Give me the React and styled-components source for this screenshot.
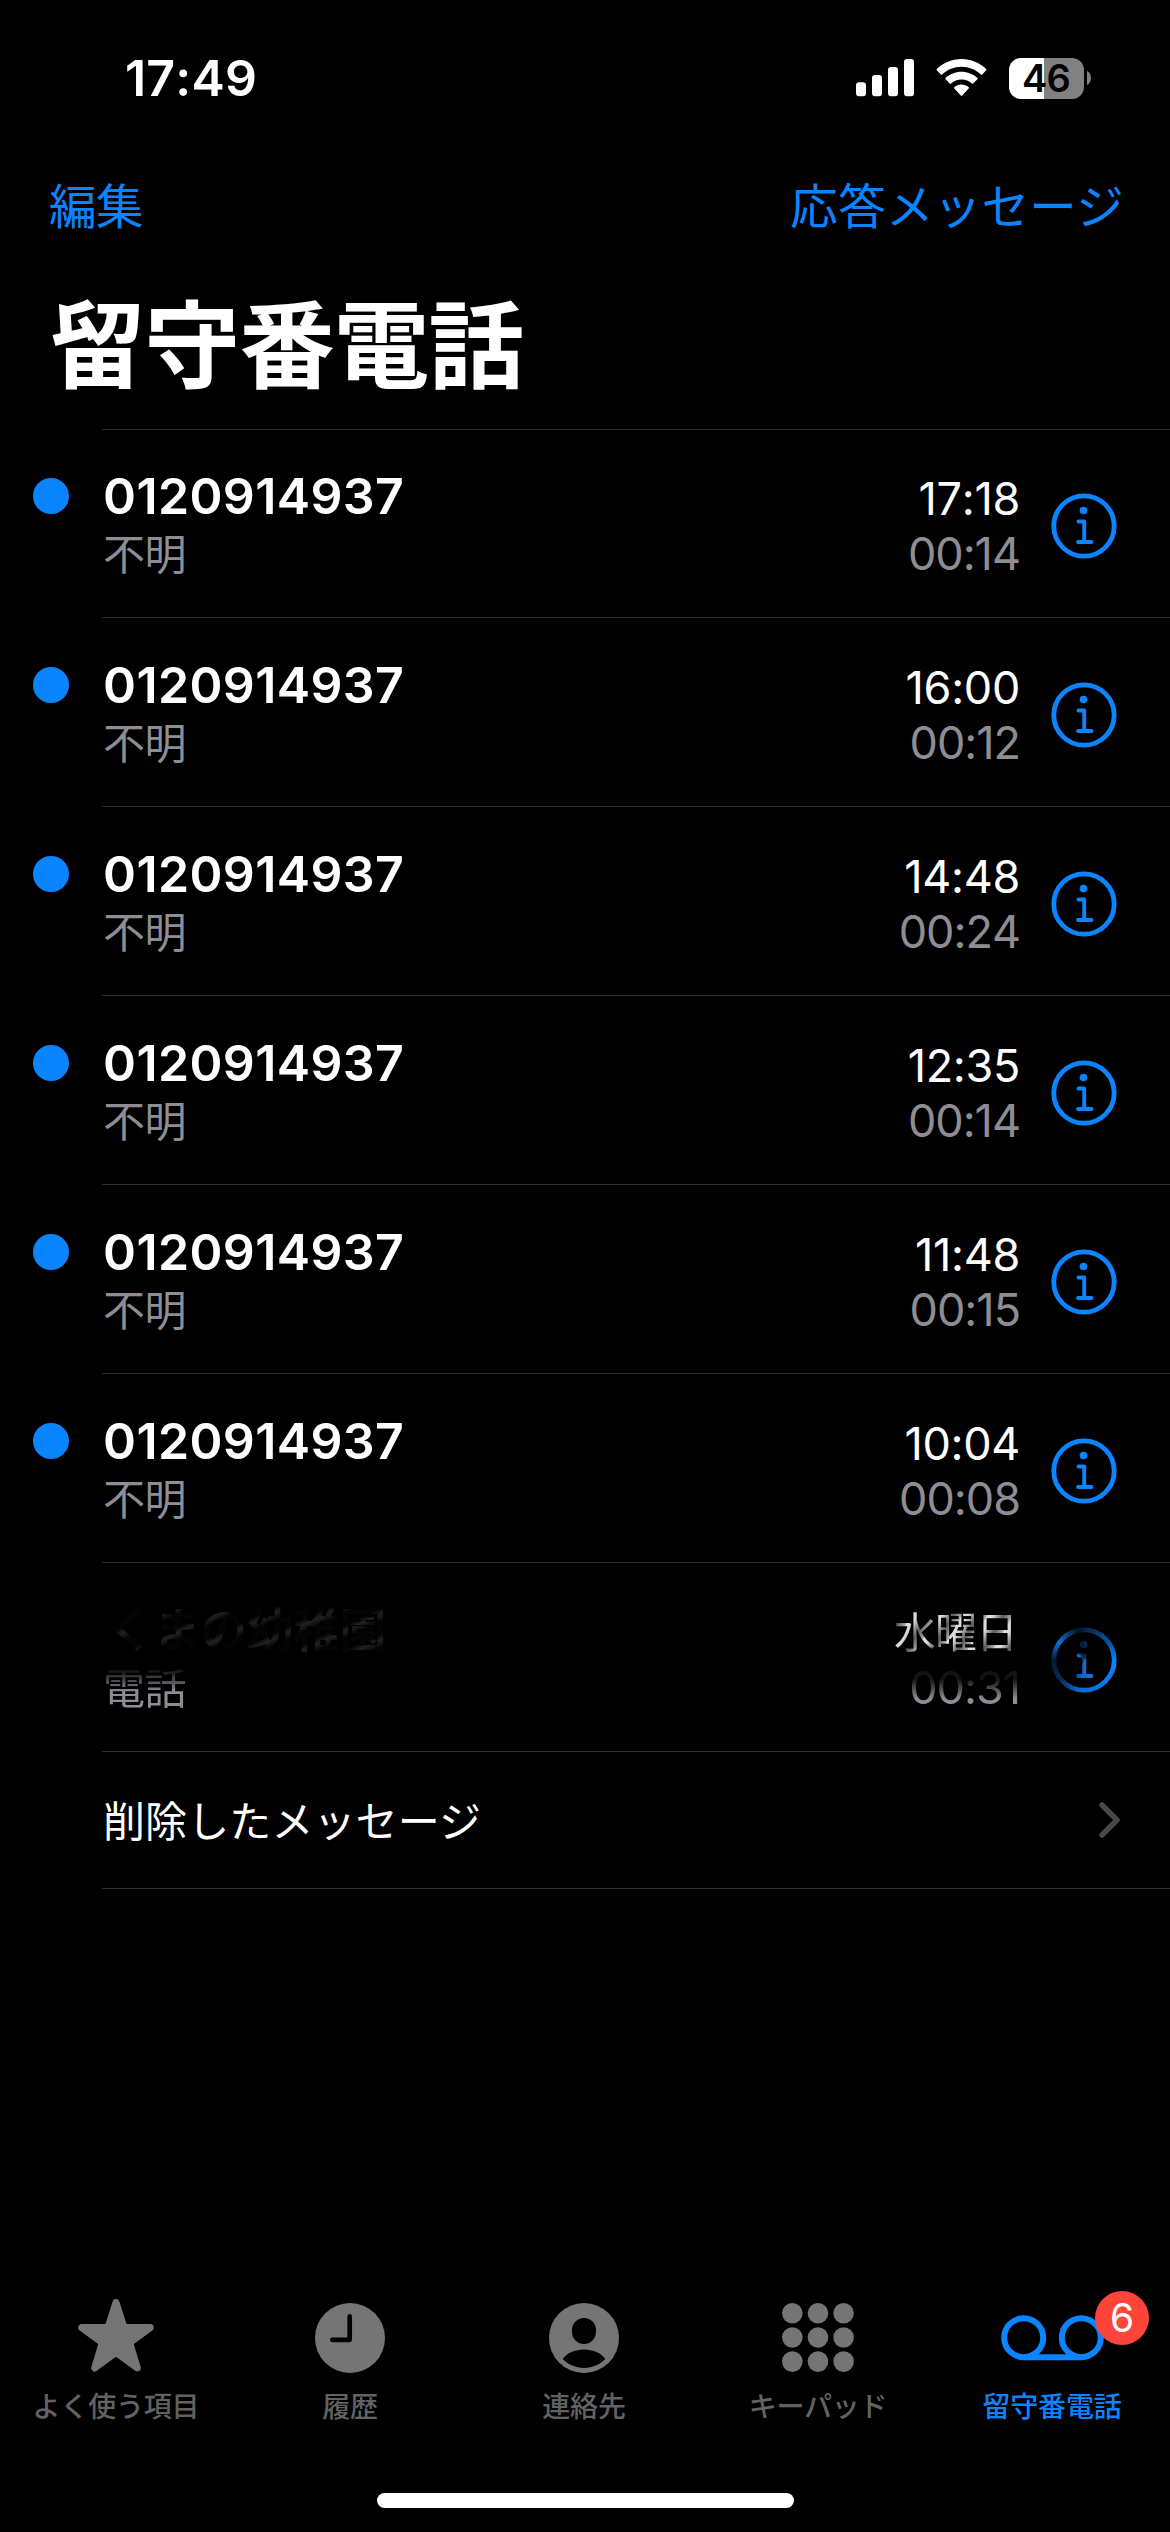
import styled, { createGlobalStyle, css } from 'styled-components'

const BLUE = '#0a84ff'
const GRAY = '#8d8d93'

const GlobalStyle = createGlobalStyle`
  * {
    box-sizing: border-box;
  }
  body {
    margin: 0;
    background-color: #000;
    color: #fff;
    font-family: Inter, 'Noto Sans CJK JP', sans-serif;
  }
  button {
    padding: 0;
    border: none;
    background: none;
    font: inherit;
    color: inherit;
  }
  svg {
    display: block;
    flex-shrink: 0;
  }
`
const Screen = styled.div`
  display: flex;
  flex-direction: column;
  width: 1170px;
  height: 2532px;
  background-color: #000;
  overflow: hidden;
`
const StatusBar = styled.div`
  display: flex;
  justify-content: space-between;
  align-items: center;
  height: 156px;
  padding: 0 79px 0 125px;
`
const Clock = styled.time`
  font-size: 50px;
  font-weight: 600;
  line-height: 60px;
  letter-spacing: 0.2px;
  font-kerning: none;
`
const StatusIcons = styled.div`
  display: flex;
  align-items: center;
  gap: 22px;
`
const Battery = styled.div`
  display: flex;
  align-items: center;
  gap: 3px;
`
const BatteryBody = styled.div`
  width: 75px;
  height: 41px;
  padding-right: 1px;
  border-radius: 12px;
  background: linear-gradient(to right, #fff 35px, #818181 35px);
  color: #000;
  font-size: 38px;
  font-weight: 600;
  line-height: 41px;
  letter-spacing: -0.8px;
  text-align: center;
`
const NavBar = styled.nav`
  display: flex;
  justify-content: space-between;
  align-items: center;
  height: 102px;
  padding: 0 46px 0 49px;
`
const NavButton = styled.button`
  color: ${BLUE};
  font-size: 47.5px;
  line-height: 60px;
  letter-spacing: ${({ $spacing = 0 }) => $spacing}px;
`
const Title = styled.h1`
  height: 171px;
  margin: 0;
  padding: 20px 0 0 50px;
  font-size: 95.5px;
  font-weight: 700;
  line-height: 136px;
  letter-spacing: -0.9px;
`
const List = styled.ul`
  margin: 0;
  padding: 0;
  list-style: none;
`
const Row = styled.li`
  display: flex;
  height: ${({ $first }) => ($first ? 188 : 189)}px;
`
const DotColumn = styled.div`
  flex: none;
  width: 102px;
  padding: ${({ $first }) => ($first ? 49 : 50)}px 0 0 33px;
`
const UnreadDot = styled.div`
  width: 36px;
  height: 36px;
  border-radius: 50%;
  background-color: ${BLUE};
`
const RowBody = styled.div`
  display: flex;
  flex: 1;
  padding: ${({ $first }) => ($first ? 34 : 35)}px 53px 0 1px;
  border-top: 1px solid #2d2d2f;
`
const Caller = styled.div`
  flex: 1;
`
const CallerName = styled.div`
  height: 64px;
  font-size: 50px;
  font-weight: 600;
  line-height: 64px;
  letter-spacing: 0.4px;
  font-kerning: none;
  ${({ $erased }) =>
    $erased &&
    css`
      padding-left: 4px;
      font-size: 47px;
      letter-spacing: -0.5px;
      color: transparent;
      background: repeating-linear-gradient(
        155deg,
        #040404 0 12px,
        #212121 17px,
        #080808 23px
      );
      background-clip: text;
    `}
`
const CallerLabel = styled.div`
  color: ${GRAY};
  font-size: 42px;
  line-height: 54px;
  letter-spacing: -0.4px;
  ${({ $erased }) =>
    $erased &&
    css`
      mask-image: linear-gradient(to bottom, transparent 5px, #000 30px);
    `}
`
const Times = styled.div`
  padding-top: 3px;
  text-align: right;
  font-size: 45px;
  font-kerning: none;
`
const ReceivedAt = styled.div`
  height: 56px;
  line-height: 64px;
  letter-spacing: -0.3px;
  ${({ $erased }) =>
    $erased &&
    css`
      padding-right: 3px;
      font-size: 42px;
      letter-spacing: -1px;
      color: transparent;
      background: repeating-linear-gradient(
        120deg,
        #dcdcdc 0 5px,
        #5a5a5a 14px,
        #b0b0b0 22px
      );
      background-clip: text;
    `}
`
const Duration = styled.div`
  color: ${GRAY};
  line-height: 62px;
  letter-spacing: -1px;
  ${({ $erased }) =>
    $erased &&
    css`
      mask-image: linear-gradient(to bottom, #0002 22px, #000 42px);
    `}
`
const InfoButton = styled.button`
  align-self: flex-start;
  margin: 29px 0 0 31px;
  ${({ $erased }) =>
    $erased &&
    css`
      mask-image: conic-gradient(
        #0004 0deg,
        #000a 60deg,
        #000 90deg,
        #000c 190deg,
        #0005 230deg,
        #0003 270deg,
        #000d 305deg,
        #0003 345deg
      );
    `}
`
const DeletedRow = styled.li`
  display: flex;
  align-items: center;
  justify-content: space-between;
  height: 138px;
  margin-left: 102px;
  padding: 0 48px 0 1px;
  border-top: 1px solid #2d2d2f;
  border-bottom: 1px solid #2d2d2f;
`
const DeletedLabel = styled.span`
  padding-bottom: 4px;
  font-size: 42px;
  letter-spacing: 0.1px;
`
const TabBar = styled.nav`
  display: grid;
  grid-template-columns: repeat(5, 1fr);
  width: 1170px;
  height: 206px;
  margin: auto 0 0 -1px;
`
const Tab = styled.button`
  display: flex;
  flex-direction: column;
  align-items: center;
  color: ${({ $active }) => ($active ? BLUE : '#757575')};
`
const TabIcon = styled.div`
  position: relative;
  display: flex;
  justify-content: center;
  align-items: center;
  width: 104px;
  height: 102px;
`
const TabLabel = styled.span`
  color: ${({ $active }) => ($active ? BLUE : '#626262')};
  font-size: 28px;
  font-weight: 500;
  line-height: 37px;
  letter-spacing: -0.2px;
  white-space: nowrap;
`
const Badge = styled.span`
  position: absolute;
  top: 4px;
  left: 95px;
  width: 54px;
  height: 54px;
  border-radius: 50%;
  background-color: #ff453a;
  color: #fff;
  font-size: 39px;
  line-height: 54px;
  text-align: center;
`
const HomeIndicator = styled.div`
  width: 417px;
  height: 15px;
  margin: 0 auto 24px;
  border-radius: 8px;
  background-color: #fff;
`

const SignalIcon = () => (
  <svg width="58" height="38" viewBox="0 0 58 38" fill="#fff">
    <rect x="0" y="23.300" width="10" height="14" rx="3" />
    <rect x="16" y="16" width="10" height="21.300" rx="3" />
    <rect x="32" y="8" width="10" height="29.300" rx="3" />
    <rect x="48" y="0" width="10" height="37.300" rx="3" />
  </svg>
)

const WifiIcon = () => (
  <svg width="51" height="38" viewBox="0 0 51 38" fill="#fff">
    <path d="M25.500 0C35 0 43.500 3.700 50.200 10q.6.700 0 1.300l-4 4.200q-.7.600-1.300 0C39.600 10.600 32.800 7.800 25.500 7.800S11.400 10.600 6.100 15.500q-.6.600-1.300 0L.8 11.300q-.6-.6 0-1.300C7.500 3.700 16 0 25.500 0z" />
    <path d="M25.500 12.800c6 0 11.600 2.300 15.900 6.200q.6.600 0 1.300l-4.200 4.200q-.6.600-1.300 0C33.100 22 29.500 20.500 25.500 20.500s-7.600 1.500-10.400 4q-.7.600-1.300 0l-4.200-4.200q-.6-.7 0-1.300C13.900 15.100 19.500 12.800 25.500 12.800z" />
    <path d="M25.500 25.500c2.700 0 5.200 1 7.200 2.700q.7.600 0 1.300l-6.500 7.100q-.7.700-1.400 0l-6.500-7.100q-.7-.7 0-1.300c2-1.700 4.500-2.700 7.200-2.700z" />
  </svg>
)

const InfoIcon = () => (
  <svg width="66" height="66" viewBox="0 0 66 66" fill="none" stroke={BLUE}>
    <circle cx="33" cy="33" r="30.200" strokeWidth="4.800" />
    <circle cx="32.500" cy="17.500" r="3.800" fill={BLUE} stroke="none" />
    <path
      d="M27.500 28.500h5.700v20.500M27 49h13.500"
      strokeWidth="3.900"
      strokeLinecap="round"
      strokeLinejoin="round"
    />
  </svg>
)

const ChevronIcon = () => (
  <svg width="24" height="38" viewBox="0 0 24 38" fill="none">
    <path
      d="M4 4l15 15L4 34"
      stroke="#48484a"
      strokeWidth="5.500"
      strokeLinecap="round"
      strokeLinejoin="round"
    />
  </svg>
)

const StarIcon = () => (
  <svg width="76" height="78" viewBox="0 0 76 78" fill="currentColor">
    <path
      d="M38 3.500L46 28.600H72.300L51.700 43.700L59.300 69L38 53.400L16.700 69L24.300 43.700L3.700 28.600H30Z"
      stroke="currentColor"
      strokeWidth="7"
      strokeLinejoin="round"
    />
  </svg>
)

const ClockIcon = () => (
  <svg width="70" height="70" viewBox="0 0 70 70">
    <circle cx="35" cy="35" r="35" fill="currentColor" />
    <path
      d="M34.700 13.300v23.500H17.300"
      fill="none"
      stroke="#000"
      strokeWidth="4.700"
      strokeLinecap="round"
      strokeLinejoin="round"
    />
  </svg>
)

const PersonIcon = () => (
  <svg width="70" height="70" viewBox="0 0 70 70">
    <circle cx="35" cy="35" r="35" fill="currentColor" />
    <rect x="23" y="15" width="24" height="26" rx="12" fill="#000" />
    <path
      d="M13.700 56C18 50 26 46.500 35 46.500S52 50 56.300 56C51 61.500 43.500 65 35 65S19 61.500 13.700 56z"
      fill="#000"
    />
  </svg>
)

const KeypadIcon = () => (
  <svg width="72" height="70" viewBox="0 0 72 70" fill="currentColor">
    {[10.3, 34.5, 58.6].map((cy) =>
      [10.3, 36, 61.6].map((cx) => (
        <circle key={`${cx}-${cy}`} cx={cx} cy={cy} r="10.300" />
      ))
    )}
  </svg>
)

const VoicemailIcon = () => (
  <svg
    width="103"
    height="46"
    viewBox="0 0 103 46"
    fill="none"
    stroke="currentColor"
    strokeWidth="6"
  >
    <circle cx="22.700" cy="22.700" r="19.500" />
    <circle cx="80.300" cy="22.700" r="19.500" />
    <path d="M22.700 42.200h57.600" />
  </svg>
)

const messages = [
  { name: '0120914937', label: '不明', time: '17:18', duration: '00:14' },
  { name: '0120914937', label: '不明', time: '16:00', duration: '00:12' },
  { name: '0120914937', label: '不明', time: '14:48', duration: '00:24' },
  { name: '0120914937', label: '不明', time: '12:35', duration: '00:14' },
  { name: '0120914937', label: '不明', time: '11:48', duration: '00:15' },
  { name: '0120914937', label: '不明', time: '10:04', duration: '00:08' },
  {
    name: 'くまの幼稚園',
    label: '電話',
    time: '水曜日',
    duration: '00:31',
    erased: true,
  },
]

const tabs = [
  { label: 'よく使う項目', Icon: StarIcon },
  { label: '履歴', Icon: ClockIcon },
  { label: '連絡先', Icon: PersonIcon },
  { label: 'キーパッド', Icon: KeypadIcon },
  { label: '留守番電話', Icon: VoicemailIcon, active: true, badge: 6 },
]

function MessageRow({ message, first }) {
  const { name, label, time, duration, erased = false } = message

  return (
    <Row $first={first}>
      <DotColumn $first={first}>{!erased && <UnreadDot />}</DotColumn>
      <RowBody $first={first}>
        <Caller>
          <CallerName $erased={erased}>{name}</CallerName>
          <CallerLabel $erased={erased}>{label}</CallerLabel>
        </Caller>
        <Times>
          <ReceivedAt $erased={erased}>{time}</ReceivedAt>
          <Duration $erased={erased}>{duration}</Duration>
        </Times>
        <InfoButton $erased={erased}>
          <InfoIcon />
        </InfoButton>
      </RowBody>
    </Row>
  )
}

export default function App() {
  return (
    <Screen lang="ja">
      <GlobalStyle />
      <StatusBar>
        <Clock>17:49</Clock>
        <StatusIcons>
          <SignalIcon />
          <WifiIcon />
          <Battery>
            <BatteryBody>46</BatteryBody>
            <svg width="4" height="14" viewBox="0 0 4 14" fill="#818181">
              <path d="M0 0c2.500 1 4 4 4 7s-1.500 6-4 7z" />
            </svg>
          </Battery>
        </StatusIcons>
      </StatusBar>
      <NavBar>
        <NavButton $spacing={-0.5}>編集</NavButton>
        <NavButton $spacing={0.3}>応答メッセージ</NavButton>
      </NavBar>
      <Title>留守番電話</Title>
      <List>
        {messages.map((message, index) => (
          <MessageRow
            key={message.time}
            message={message}
            first={index === 0}
          />
        ))}
        <DeletedRow>
          <DeletedLabel>削除したメッセージ</DeletedLabel>
          <ChevronIcon />
        </DeletedRow>
      </List>
      <TabBar>
        {tabs.map(({ label, Icon, active, badge }) => (
          <Tab key={label} $active={active}>
            <TabIcon>
              <Icon />
              {badge && <Badge>{badge}</Badge>}
            </TabIcon>
            <TabLabel $active={active}>{label}</TabLabel>
          </Tab>
        ))}
      </TabBar>
      <HomeIndicator />
    </Screen>
  )
}
